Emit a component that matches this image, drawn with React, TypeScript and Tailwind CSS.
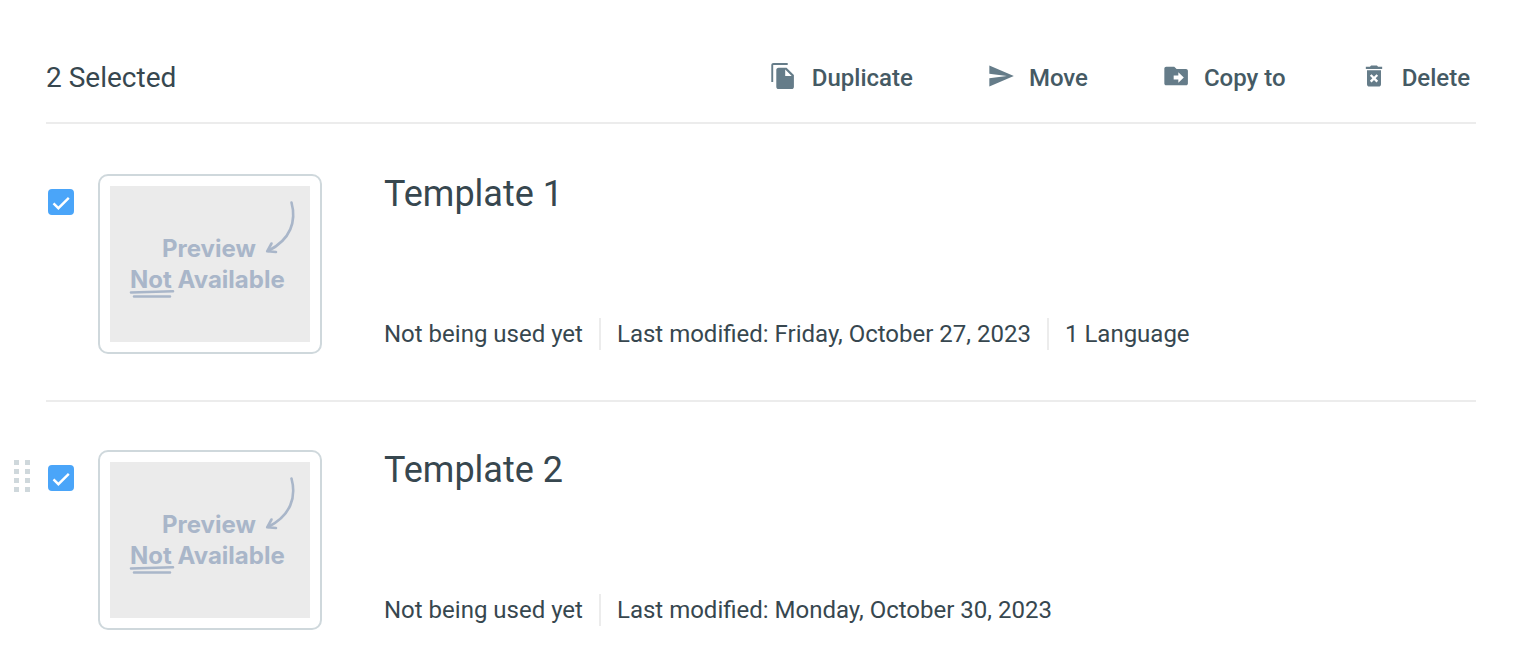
import { useState } from "react";
import { MdDeleteForever, MdSend } from "react-icons/md";
import clsx from "clsx";

const templates = [
    {
        id: 1,
        title: "Template 1",
        draggable: false,
        meta: ["Not being used yet", "Last modified: Friday, October 27, 2023", "1 Language"],
    },
    {
        id: 2,
        title: "Template 2",
        draggable: true,
        meta: ["Not being used yet", "Last modified: Monday, October 30, 2023"],
    },
];

const FilesIcon = () => (
    <svg viewBox="0 0 28 28" fill="currentColor" className="w-7 h-7" aria-hidden="true">
        <path d="M17.7 1H3.6C2.2 1 1.3 1.9 1.3 3.3V20h1.9V2.9h14.5z" />
        <path
            fillRule="evenodd"
            d="M16.5 5.8H8.6c-1.4 0-2.3.9-2.3 2.3v16.6c0 1.400.9 2.300 2.300 2.300h13c1.400 0 2.300-.9 2.300-2.300V13zM15.200 7.400l6.500 6.500h-6.500z"
        />
    </svg>
);

const FolderMoveIcon = () => (
    <svg viewBox="0 0 24 24" fill="currentColor" className="w-7 h-7" aria-hidden="true">
        <path
            fillRule="evenodd"
            d="M20.600 6H12.500l-2-2H3.600C2.700 4 2 4.700 2 5.600v12.800c0 .9.7 1.600 1.600 1.600h17c.9 0 1.600-.7 1.600-1.600V7.600c0-.9-.7-1.600-1.600-1.600zM14 17.800v-2.800h-4v-3.400h4V8.800l4.700 4.500z"
        />
    </svg>
);

const actions = [
    { label: "Duplicate", icon: <FilesIcon /> },
    { label: "Move", icon: <MdSend size={28} /> },
    { label: "Copy to", icon: <FolderMoveIcon /> },
    { label: "Delete", icon: <MdDeleteForever size={28} /> },
];

const DragHandle = () => (
    <button type="button" aria-label="Reorder template" className="block mt-2.5 cursor-grab text-[#cfd8dc]">
        <svg viewBox="0 0 16 32" fill="currentColor" className="w-4 h-8" aria-hidden="true">
            {[0, 9, 18, 27].map((y) => (
                <g key={y}>
                    <rect x="0" y={y} width="5" height="5" />
                    <rect x="11" y={y} width="5" height="5" />
                </g>
            ))}
        </svg>
    </button>
);

const Preview = () => (
    <div className="w-56 shrink-0 border-2 border-[#cfd8dc] rounded-[10px] p-2.5">
        <div className="relative h-[156px] bg-[#ebebeb] pt-[47px] pl-5 font-['Inter',sans-serif] font-bold text-2xl leading-[31px] text-[#a9b6c9] whitespace-nowrap">
            <p className="pl-8">Preview</p>
            <p>Not Available</p>
            <svg
                viewBox="0 0 200 156"
                fill="none"
                stroke="currentColor"
                strokeWidth="2.6"
                strokeLinecap="round"
                strokeLinejoin="round"
                className="absolute inset-0 w-full h-full"
                aria-hidden="true"
            >
                <path d="M181.5 16.500c5 18.500-.5 37-23.500 48.500" />
                <path d="M161.500 57.500l-4.300 7.800 8.800.7" />
                <path d="M21 106.500l42-1.200M24 110.500h36" />
            </svg>
        </div>
    </div>
);

const App = () => {
    const [selected, setSelected] = useState<number[]>([1, 2]);

    const toggle = (id: number) =>
        setSelected(selected.includes(id) ? selected.filter((item) => item !== id) : [...selected, id]);

    return (
        <main className="min-h-screen bg-white pr-[50px] font-['Roboto',sans-serif] text-[#37474f]">
            <header className="flex items-center justify-between ml-[46px] mb-0.5 pt-[60px] pb-[26px] pr-1.5 border-b-2 border-[#ececec]">
                <h1 className="text-[28px] leading-9">{selected.length} Selected</h1>
                <div className="flex items-center gap-[74px]">
                    {actions.map((action) => (
                        <button
                            key={action.label}
                            type="button"
                            className="flex items-center gap-3.5 text-2xl font-medium text-[#455a64] cursor-pointer"
                        >
                            <span className="mb-1 text-[#657c89]">{action.icon}</span>
                            {action.label}
                        </button>
                    ))}
                </div>
            </header>
            <ul>
                {templates.map((template, index) => (
                    <li key={template.id} className="flex">
                        <div className="w-[46px] shrink-0 pt-12 pl-3.5">{template.draggable && <DragHandle />}</div>
                        <article
                            className={clsx(
                                "flex flex-1 pt-12 pb-[46px] pl-0.5",
                                index < templates.length - 1 && "border-b-2 border-[#ececec]"
                            )}
                        >
                            <label className="relative w-[26px] h-[26px] mt-[15px] mr-6 shrink-0 text-white cursor-pointer">
                                <input
                                    type="checkbox"
                                    aria-label={`Select ${template.title}`}
                                    checked={selected.includes(template.id)}
                                    onChange={() => toggle(template.id)}
                                    className="block w-full h-full appearance-none rounded border-2 border-[#cfd8dc] checked:border-[#4aa5f9] checked:bg-[#4aa5f9]"
                                />
                                <svg
                                    viewBox="0 0 26 26"
                                    fill="none"
                                    stroke="currentColor"
                                    strokeWidth="2.4"
                                    className="absolute inset-0 pointer-events-none"
                                    aria-hidden="true"
                                >
                                    <path d="M5.500 14.300l4.900 4.900L20.800 8.800" />
                                </svg>
                            </label>
                            <Preview />
                            <div className="flex flex-col justify-between flex-1 ml-[62px] pb-1">
                                <h2 className="text-4xl">{template.title}</h2>
                                <div className="flex text-2xl">
                                    {template.meta.map((text, i) => (
                                        <span
                                            key={text}
                                            className={clsx(i > 0 && "ml-4 pl-4 border-l-2 border-[#ececec]")}
                                        >
                                            {text}
                                        </span>
                                    ))}
                                </div>
                            </div>
                        </article>
                    </li>
                ))}
            </ul>
        </main>
    );
};

export default App;
